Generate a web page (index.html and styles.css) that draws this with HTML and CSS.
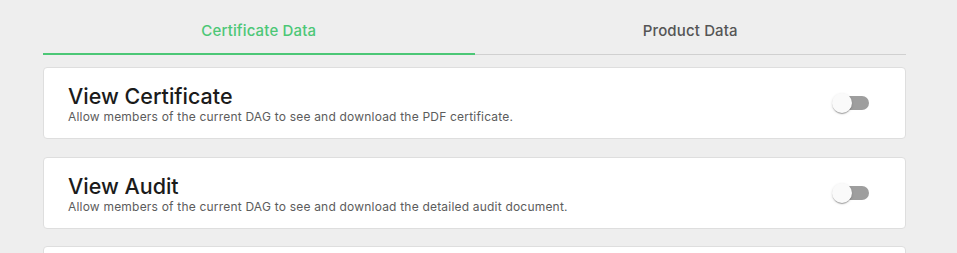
FILE: index.html
```html
<!DOCTYPE html>
<html>
<head>
<meta charset="utf-8">
<link rel="stylesheet" href="styles.css">
</head>
<body>
<div class="page">
  <div class="tabs">
    <div class="tab active">Certificate Data</div>
    <div class="tab">Product Data</div>
  </div>
  <div class="list">
    <div class="card">
      <div class="text">
        <div class="title">View Certificate</div>
        <div class="desc">Allow members of the current DAG to see and download the PDF certificate.</div>
      </div>
      <div class="switch"><span class="track"></span><span class="thumb"></span></div>
    </div>
    <div class="card">
      <div class="text">
        <div class="title">View Audit</div>
        <div class="desc">Allow members of the current DAG to see and download the detailed audit document.</div>
      </div>
      <div class="switch"><span class="track"></span><span class="thumb"></span></div>
    </div>
    <div class="card"></div>
  </div>
</div>
</body>
</html>
```
FILE: styles.css
```css
html, body {
  margin: 0;
  padding: 0;
  background: #eeeeee;
  font-family: Inter, "Open Sans", sans-serif;
}
.page {
  width: 863px;
  margin-left: 43px;
}
.tabs {
  display: flex;
  border-bottom: 1px solid #d0d0d0;
  height: 54px;
}
.tab {
  flex: 1;
  display: flex;
  align-items: center;
  justify-content: center;
  font-size: 15px;
  letter-spacing: 0.15px;
  font-weight: 500;
  color: #555555;
  padding-top: 7px;
  box-sizing: border-box;
}
.tab.active {
  color: #4cc776;
  border-bottom: 2px solid #4cc776;
  margin-bottom: -1px;
}
.list {
  display: flex;
  flex-direction: column;
  gap: 17.5px;
  margin-top: 12px;
}
.card {
  background: #ffffff;
  border: 1px solid #dedede;
  border-radius: 4px;
  height: 72px;
  box-sizing: border-box;
  padding: 0 24px;
  display: flex;
  align-items: center;
}
.text {
  flex: 1;
  padding-top: 2px;
}
.title {
  font-size: 21.5px;
  font-weight: 500;
  color: #1b1b1b;
  line-height: 26px;
}
.desc {
  font-size: 12px;
  letter-spacing: 0.2px;
  color: #5c5c5c;
  line-height: 16px;
}
.switch {
  position: relative;
  width: 58px;
  height: 38px;
}
.track {
  position: absolute;
  left: 12px;
  top: 12px;
  width: 34px;
  height: 14px;
  border-radius: 7px;
  background: #9e9e9e;
}
.thumb {
  position: absolute;
  left: 9px;
  top: 9px;
  width: 20px;
  height: 20px;
  border-radius: 50%;
  background: #fafafa;
  box-shadow: 0 2px 1px -1px rgba(0,0,0,0.2), 0 1px 1px 0 rgba(0,0,0,0.14), 0 1px 3px 0 rgba(0,0,0,0.12);
}
```
